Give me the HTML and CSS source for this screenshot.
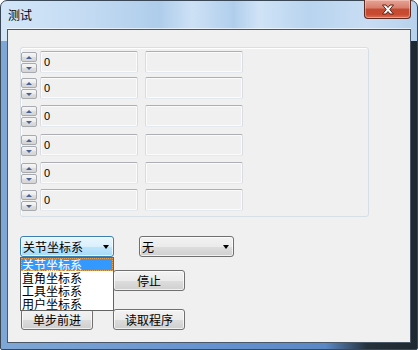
FILE: index.html
```html
<!doctype html>
<html>
<head>
<meta charset="utf-8">
<link rel="stylesheet" href="styles.css">
</head>
<body>
<div class='window'>
	<div class='titlebar'>
		<span class='title'>测试</span>
		<div class='close'>
			<svg width="14" height="11" viewBox="0 0 14 11"><path d="M1.5 1 L5 1 L7 3.5 L9 1 L12.5 1 L8.8 5.5 L12.5 10 L9 10 L7 7.5 L5 10 L1.5 10 L5.2 5.5 Z" fill="#fff" stroke="#5a2418" stroke-width="1" stroke-linejoin="round"/></svg>
		</div>
	</div>
	<div class='client'>
		<div class='group'>
			<div class='row'>
				<div class='spin'><div class='spinbtn'><i class='up'></i></div><div class='spinbtn'><i class='down'></i></div></div>
				<div class='edit'>0</div>
				<div class='edit'></div>
			</div>
			<div class='row'>
				<div class='spin'><div class='spinbtn'><i class='up'></i></div><div class='spinbtn'><i class='down'></i></div></div>
				<div class='edit'>0</div>
				<div class='edit'></div>
			</div>
			<div class='row'>
				<div class='spin'><div class='spinbtn'><i class='up'></i></div><div class='spinbtn'><i class='down'></i></div></div>
				<div class='edit'>0</div>
				<div class='edit'></div>
			</div>
			<div class='row'>
				<div class='spin'><div class='spinbtn'><i class='up'></i></div><div class='spinbtn'><i class='down'></i></div></div>
				<div class='edit'>0</div>
				<div class='edit'></div>
			</div>
			<div class='row'>
				<div class='spin'><div class='spinbtn'><i class='up'></i></div><div class='spinbtn'><i class='down'></i></div></div>
				<div class='edit'>0</div>
				<div class='edit'></div>
			</div>
			<div class='row'>
				<div class='spin'><div class='spinbtn'><i class='up'></i></div><div class='spinbtn'><i class='down'></i></div></div>
				<div class='edit'>0</div>
				<div class='edit'></div>
			</div>
		</div>

		<div class='combos'>
			<div class='combowrap'>
				<div class='combo open'><span>关节坐标系</span><i class='arrow'></i></div>
				<ul class='droplist'>
					<li class='sel'>关节坐标系</li>
					<li>直角坐标系</li>
					<li>工具坐标系</li>
					<li>用户坐标系</li>
				</ul>
			</div>
			<div class='combo wide'><span>无</span><i class='arrow'></i></div>
		</div>

		<!-- first button of this row sits under the open list -->
		<div class='btnrow first'>
			<div class='btn'></div>
			<div class='btn'>停止</div>
		</div>
		<div class='btnrow'>
			<div class='btn'>单步前进</div>
			<div class='btn'>读取程序</div>
		</div>
	</div>
</div>
</body>
</html>
```

FILE: styles.css
```css
html, body{
	margin:0px;
	padding:0px;
}
body{
	width:418px;
	height:350px;
	overflow:hidden;
	background:#fff;
	font-family:"Noto Sans CJK SC", sans-serif;
}
.window{
	box-sizing:border-box;
	width:418px;
	height:350px;
	border:1px solid #3a4756;
	border-radius:7px 7px 2px 2px;
	padding:0px 6px 6px 6px;
	display:flex;
	flex-direction:column;
	background:
		linear-gradient(to right, #7fa7d6 0%, #6593cf 50%, #5a88c4 78%, #26323c 88%, #1e2830 100%) 0 40px / 100% 100% no-repeat,
		linear-gradient(to right, #d3e6f8 0%, #c2daf2 22%, #aecdeb 38%, #cde1f5 46%, #b0ceec 56%, #d0e3f6 62%, #b8d4ef 74%, #c8ddf3 88%, #b7d1ec 100%);
}
.titlebar{
	height:28px;
	display:flex;
	justify-content:space-between;
	align-items:flex-start;
}
.title{
	font-size:12px;
	line-height:14px;
	padding:7px 0 0 1px;
	color:#000;
}
.close{
	box-sizing:border-box;
	width:47px;
	height:19px;
	margin-top:-1px;
	border:1px solid #5b2a22;
	border-top:none;
	border-radius:0 0 4px 4px;
	background:linear-gradient(to bottom, #e6a497 0%, #d77e6b 45%, #c34a33 50%, #c94a30 80%, #d9735a 100%);
	box-shadow:inset 0 0 0 1px rgba(255,220,210,.45);
	display:flex;
	align-items:center;
	justify-content:center;
}
.close svg{
	display:block;
}
.client{
	flex:1;
	border:1px solid #4a5868;
	background:#f0f0f0;
	padding:17px 0 0 12px;
	position:relative;
	box-shadow:0 -1px 0 rgba(255,255,255,.6);
}
.group{
	box-sizing:border-box;
	width:349px;
	height:170px;
	border:1px solid #d5dfe5;
	border-radius:3px;
	box-shadow:inset 1px 1px 0 #fff;
	padding:3px 0 0 0;
	display:flex;
	flex-direction:column;
}
.row{
	display:flex;
	height:22px;
}
.row:nth-child(2){ margin-top:4px; }
.row:nth-child(3){ margin-top:6px; }
.row:nth-child(4){ margin-top:7px; }
.row:nth-child(5){ margin-top:6px; }
.row:nth-child(6){ margin-top:5px; }
.spin{
	width:16px;
	margin:1px 3px 0 0;
	display:flex;
	flex-direction:column;
	gap:1px;
}
.spinbtn{
	box-sizing:border-box;
	height:10px;
	border:1px solid #a7abb0;
	border-radius:2px;
	background:linear-gradient(to bottom, #f6f6f6 0%, #ebebeb 50%, #dedede 51%, #d4d4d4 100%);
	display:flex;
	align-items:center;
	justify-content:center;
}
.spinbtn i{
	width:0;
	height:0;
	border-left:3px solid transparent;
	border-right:3px solid transparent;
}
.spinbtn i.up{
	border-bottom:3px solid #4b6296;
}
.spinbtn i.down{
	border-top:3px solid #4b6296;
}
.edit{
	box-sizing:border-box;
	width:98px;
	height:22px;
	margin-right:7px;
	border:1px solid;
	border-color:#acaeb3 #d9dde3 #e3e9ef #d9dde3;
	border-radius:2px;
	box-shadow:inset 0 0 0 1px #fbfbfb;
	font-family:"Liberation Sans", sans-serif;
	font-size:11px;
	line-height:20px;
	padding-left:3px;
	color:#000;
}
.combos{
	display:flex;
	gap:25px;
	margin-top:19px;
}
.combowrap{
	position:relative;
}
.combo{
	box-sizing:border-box;
	width:94px;
	height:21px;
	border:1px solid #707070;
	border-radius:3px;
	background:linear-gradient(to bottom, #f2f2f2 0%, #ebebeb 50%, #dddddd 51%, #cfcfcf 100%);
	box-shadow:inset 0 0 0 1px rgba(255,255,255,.7);
	display:flex;
	align-items:center;
	justify-content:space-between;
	padding:0 3px 0 2px;
	font-size:12px;
	line-height:14px;
	color:#000;
}
.combo.open{
	border-color:#3c7fb1;
	background:linear-gradient(to bottom, #eaf6fd 0%, #d9f0fc 50%, #bee6fd 51%, #a7d9f5 100%);
}
.combo.wide{
	width:95px;
}
.arrow{
	width:0;
	height:0;
	border-left:3.5px solid transparent;
	border-right:3.5px solid transparent;
	border-top:4px solid #000;
	margin-right:1px;
}
.droplist{
	position:absolute;
	left:0;
	top:21px;
	z-index:2;
	box-sizing:border-box;
	width:94px;
	margin:0;
	padding:0;
	list-style:none;
	background:#fff;
	border:1px solid #646464;
}
.droplist li{
	height:13px;
	line-height:13px;
	font-size:12px;
	padding-left:1px;
	color:#000;
	white-space:nowrap;
}
.droplist li.sel{
	background:#3399ff;
	color:#fff;
	outline:1px dotted #e8a050;
	outline-offset:-1px;
}
.btnrow{
	display:flex;
	gap:20px;
	margin:18px 0 0 1px;
}
.btnrow.first{
	margin-top:13px;
}
.btn{
	box-sizing:border-box;
	width:72px;
	height:21px;
	border:1px solid #707070;
	border-radius:3px;
	background:linear-gradient(to bottom, #f2f2f2 0%, #ebebeb 50%, #dddddd 51%, #cfcfcf 100%);
	box-shadow:inset 0 0 0 1px rgba(255,255,255,.7);
	font-size:12px;
	line-height:19px;
	text-align:center;
	color:#000;
}
```
